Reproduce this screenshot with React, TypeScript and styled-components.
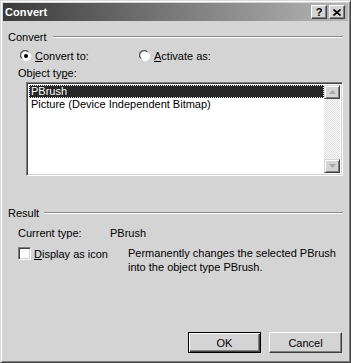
import React from "react";
import styled, { createGlobalStyle } from "styled-components";

const Global = createGlobalStyle`
  html, body { margin: 0; padding: 0; background: #d4d4d4; }
  body { font-family: "Liberation Sans", Arial, sans-serif; font-size: 11px; color: #000; }
`;

const Frame = styled.div`
  width: 351px;
  height: 363px;
  box-sizing: border-box;
  background: #d4d4d4;
  border: 1px solid;
  border-color: #dadada #404040 #404040 #dadada;
  box-shadow: inset 1px 1px #ffffff, inset -1px -1px #808080;
  padding: 2px;
  display: flex;
  flex-direction: column;
`;

const TitleBar = styled.div`
  height: 18px;
  flex: none;
  display: flex;
  align-items: center;
  padding: 0 3px 0 2px;
  background: linear-gradient(to right, #3a3a3a 0%, #6e6e6e 40%, #b6b6b6 100%);
`;

const Title = styled.div`
  flex: 1;
  color: #fff;
  font-weight: bold;
  font-size: 11px;
  letter-spacing: 0.1px;
`;

const CapButton = styled.div<{ $gap?: number }>`
  width: 16px;
  height: 14px;
  box-sizing: border-box;
  margin-left: ${(p) => p.$gap ?? 0}px;
  background: #d4d4d4;
  border: 1px solid;
  border-color: #ffffff #404040 #404040 #ffffff;
  box-shadow: inset -1px -1px #808080;
  display: flex;
  align-items: center;
  justify-content: center;
  font-weight: bold;
  font-size: 11px;
  line-height: 12px;
`;

const Body = styled.div`
  flex: 1;
  display: flex;
  flex-direction: column;
  padding: 0 5px 7px 5px;
`;

const GroupHeader = styled.div<{ $top: number }>`
  display: flex;
  align-items: center;
  height: 13px;
  margin-top: ${(p) => p.$top}px;
`;

const GroupLine = styled.div<{ $gap: number }>`
  flex: 1;
  margin-left: ${(p) => p.$gap}px;
  margin-top: 1px;
  border-top: 1px solid #8a8a8a;
  border-bottom: 1px solid #ffffff;
`;

const Row = styled.div<{ $top: number; $indent: number }>`
  display: flex;
  align-items: center;
  height: 13px;
  margin-top: ${(p) => p.$top}px;
  padding-left: ${(p) => p.$indent}px;
`;

const Option = styled.label<{ $width?: number }>`
  display: flex;
  align-items: center;
  width: ${(p) => (p.$width ? `${p.$width}px` : "auto")};
`;

const OptionText = styled.span`
  margin-left: 3px;
`;

const Key = styled.span`
  text-decoration: underline;
`;

const ListBox = styled.div`
  margin-top: 3px;
  margin-left: 18px;
  width: 317px;
  height: 94px;
  box-sizing: border-box;
  border: 1px solid;
  border-color: #808080 #ffffff #ffffff #808080;
  box-shadow: inset 1px 1px #404040, inset -1px -1px #d4d4d4;
  padding: 2px;
  background: #fff;
  display: flex;
`;

const ListItems = styled.div`
  flex: 1;
  display: flex;
  flex-direction: column;
`;

const ListItem = styled.div<{ $selected?: boolean }>`
  height: 13px;
  line-height: 11px;
  box-sizing: border-box;
  padding-left: 1px;
  background: ${(p) => (p.$selected ? "#262626" : "transparent")};
  color: ${(p) => (p.$selected ? "#fff" : "#000")};
  border: 1px dotted ${(p) => (p.$selected ? "#e8e8e8" : "transparent")};
`;

const ScrollBar = styled.div`
  width: 16px;
  display: flex;
  flex-direction: column;
  justify-content: space-between;
  background-color: #ececec;
  background-image: repeating-conic-gradient(#e2e2e2 0 25%, #f8f8f8 0 50%);
  background-size: 2px 2px;
`;

const ScrollButton = styled.div`
  height: 14px;
  box-sizing: border-box;
  background: #d4d4d4;
  border: 1px solid;
  border-color: #d4d4d4 #404040 #404040 #d4d4d4;
  box-shadow: inset 1px 1px #ffffff, inset -1px -1px #808080;
  display: flex;
  align-items: center;
  justify-content: center;
`;

const Text = styled.span<{ $width?: number }>`
  display: inline-block;
  width: ${(p) => (p.$width ? `${p.$width}px` : "auto")};
`;

const CheckRow = styled.div`
  display: flex;
  align-items: flex-start;
  margin-top: 8px;
  padding-left: 10px;
`;

const CheckOption = styled.label`
  display: flex;
  align-items: center;
  height: 13px;
  width: 110px;
`;

const CheckBox = styled.span`
  width: 13px;
  height: 13px;
  box-sizing: border-box;
  flex: none;
  background: #fff;
  border: 1px solid;
  border-color: #808080 #ffffff #ffffff #808080;
  box-shadow: inset 1px 1px #404040, inset -1px -1px #d4d4d4;
`;

const Description = styled.div`
  line-height: 14px;
  margin-top: -1px;
`;

const ButtonRow = styled.div`
  margin-top: auto;
  display: flex;
  justify-content: flex-end;
  gap: 8px;
  padding-right: 1px;
`;

const PushButton = styled.button<{ $default?: boolean }>`
  width: 73px;
  height: 21px;
  box-sizing: border-box;
  font-family: "Liberation Sans", Arial, sans-serif;
  font-size: 11px;
  color: #000;
  background: #d4d4d4;
  padding: 0;
  border: 1px solid;
  border-color: ${(p) => (p.$default ? "#000 #000 #000 #000" : "#ffffff #404040 #404040 #ffffff")};
  box-shadow: ${(p) =>
    p.$default
      ? "inset 1px 1px #ffffff, inset -1px -1px #404040, inset -2px -2px #808080"
      : "inset -1px -1px #808080"};
`;

const Radio = ({ checked }: { checked?: boolean }) => (
  <svg width="12" height="12" viewBox="0 0 12 12">
    <path d="M1 8 A5 5 0 0 1 8 1" fill="none" stroke="#808080" strokeWidth="1" />
    <circle cx="6" cy="6" r="4.6" fill="#fff" />
    <path d="M2 8.5 A4.2 4.2 0 0 1 8.5 2" fill="none" stroke="#404040" strokeWidth="1" />
    <path d="M10.5 4 A5 5 0 0 1 4 10.5" fill="none" stroke="#fff" strokeWidth="1" />
    {checked && <circle cx="6" cy="6" r="2" fill="#000" />}
  </svg>
);

const Arrow = ({ up }: { up?: boolean }) => (
  <svg width="7" height="4" viewBox="0 0 7 4">
    <path d={up ? "M3.5 0 L7 4 L0 4 Z" : "M0 0 L7 0 L3.5 4 Z"} fill="#a8a8a8" />
  </svg>
);

export default function App() {
  return (
    <>
      <Global />
      <Frame>
        <TitleBar>
          <Title>Convert</Title>
          <CapButton>?</CapButton>
          <CapButton $gap={2}>
            <svg width="8" height="7" viewBox="0 0 8 7">
              <path d="M0.5 0.5 L7.5 6.5 M7.5 0.5 L0.5 6.5" stroke="#000" strokeWidth="1.6" />
            </svg>
          </CapButton>
        </TitleBar>
        <Body>
          <GroupHeader $top={9}>
            <span>Convert</span>
            <GroupLine $gap={6} />
          </GroupHeader>
          <Row $top={6} $indent={12}>
            <Option $width={119}>
              <Radio checked />
              <OptionText>
                <Key>C</Key>onvert to:
              </OptionText>
            </Option>
            <Option>
              <Radio />
              <OptionText>
                <Key>A</Key>ctivate as:
              </OptionText>
            </Option>
          </Row>
          <Row $top={4} $indent={10}>
            <span>
              Object ty<Key>p</Key>e:
            </span>
          </Row>
          <ListBox>
            <ListItems>
              <ListItem $selected>PBrush</ListItem>
              <ListItem>Picture (Device Independent Bitmap)</ListItem>
            </ListItems>
            <ScrollBar>
              <ScrollButton>
                <Arrow up />
              </ScrollButton>
              <ScrollButton>
                <Arrow />
              </ScrollButton>
            </ScrollBar>
          </ListBox>
          <GroupHeader $top={30}>
            <span>Result</span>
            <GroupLine $gap={5} />
          </GroupHeader>
          <Row $top={7} $indent={10}>
            <Text $width={92}>Current type:</Text>
            <Text>PBrush</Text>
          </Row>
          <CheckRow>
            <CheckOption>
              <CheckBox />
              <OptionText>
                <Key>D</Key>isplay as icon
              </OptionText>
            </CheckOption>
            <Description>
              Permanently changes the selected PBrush
              <br />
              into the object type PBrush.
            </Description>
          </CheckRow>
          <ButtonRow>
            <PushButton $default>OK</PushButton>
            <PushButton>Cancel</PushButton>
          </ButtonRow>
        </Body>
      </Frame>
    </>
  );
}
